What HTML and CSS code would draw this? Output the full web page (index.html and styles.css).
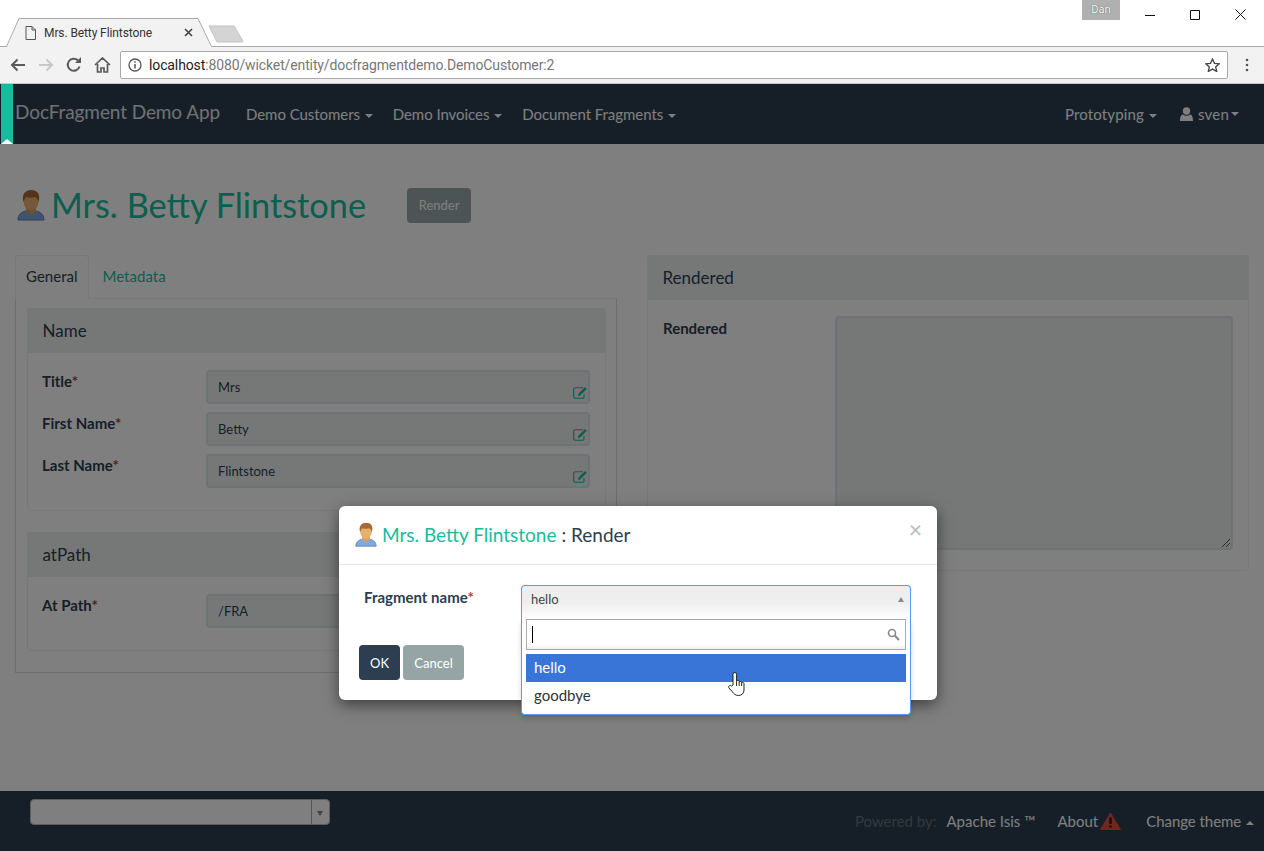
FILE: index.html
```html
<!DOCTYPE html>
<html>
<head>
    <title>Mrs. Betty Flintstone</title>
    <link rel="stylesheet" href="styles.css">
</head>
<body>
    <svg class="defs" width="0" height="0">
        <symbol id="person" viewBox="0 0 28 32">
            <path d="M1 31c0-6 4-8 8-9l5 2 5-2c4 1 8 3 8 9z" fill="#7fa9e0" stroke="#5a7fb5"/>
            <path d="M9 17h10v6l-5 3-5-3z" fill="#d9a066"/>
            <ellipse cx="14" cy="12" rx="7.5" ry="9.500" fill="#e8b06e"/>
            <path d="M6.500 13C4 5 9 1 14 1c6 0 10 4 7.500 12-1-3-2-4.500-3.500-5-3 1-6.500 1-8 0-1.500.5-2.500 2-3.500 5z" fill="#a5683a"/>
        </symbol>
        <symbol id="edit" viewBox="0 0 15 13">
            <path d="M11 8v2.500a1.800 1.800 0 0 1-1.800 1.800H2.300A1.800 1.800 0 0 1 .7 10.500V3.500A1.800 1.800 0 0 1 2.500 1.700H10" fill="none" stroke="#18bc9c" stroke-width="1.100"/>
            <path d="M5 10l.4-2.300L12 1l1.800 1.800-6.600 6.700z" fill="#18bc9c"/>
        </symbol>
    </svg>

    <div class="browser">
        <div class="tabstrip">
            <svg class="tab-shape" width="250" height="47" viewBox="0 0 250 47">
                <path d="M7 47L19 19h179l14 28z" fill="#f2f2f2"/>
                <path d="M0 46.500h6.500L19 18.500h179l13.500 28" fill="none" stroke="#a9a9a9"/>
                <path d="M209 26h25l9 15a1 1 0 0 1-1 1h-25z" fill="#d4d4d4" stroke="#c4c4c4"/>
            </svg>
            <div class="tab">
                <svg class="tab-page" width="11" height="14" viewBox="0 0 11 14"><path d="M1 .5h6l3.500 3.500v9.500H1zM7 .5V4h3.500" fill="none" stroke="#555"/></svg>
                <span class="tab-title">Mrs. Betty Flintstone</span>
                <svg class="tab-close" width="9" height="9" viewBox="0 0 9 9"><path d="M1 1l7 7M8 1L1 8" stroke="#444" stroke-width="1.600"/></svg>
            </div>
            <div class="win-user">Dan</div>
            <div class="win-buttons">
                <svg width="10" height="10" viewBox="0 0 10 10"><path d="M0 5.500h10" stroke="#111"/></svg>
                <svg width="10" height="10" viewBox="0 0 10 10"><path d="M.5.500h9v9h-9z" fill="none" stroke="#111"/></svg>
                <svg width="11" height="11" viewBox="0 0 11 11"><path d="M.5.500l10 10M10.500.500l-10 10" stroke="#111"/></svg>
            </div>
        </div>
        <div class="toolbar">
            <svg class="tool" width="16" height="14" viewBox="0 0 16 14"><path d="M15 7H2M7.500 1.500L2 7l5.500 5.500" fill="none" stroke="#5a5a5a" stroke-width="2"/></svg>
            <svg class="tool" width="16" height="14" viewBox="0 0 16 14"><path d="M1 7h13M8.500 1.500L14 7l-5.500 5.500" fill="none" stroke="#c8c8c8" stroke-width="2"/></svg>
            <svg class="tool" width="16" height="16" viewBox="0 0 16 16"><path d="M13.500 9.500A6 6 0 1 1 12 3.500" fill="none" stroke="#5a5a5a" stroke-width="2"/><path d="M9 6h6V0z" fill="#5a5a5a"/></svg>
            <svg class="tool" width="17" height="16" viewBox="0 0 17 16"><path d="M1 8l7.500-7L16 8M3.500 7v8h3.500v-4h3v4h3.500V7" fill="none" stroke="#5a5a5a" stroke-width="1.700"/></svg>
            <div class="omnibox">
                <svg width="14" height="14" viewBox="0 0 14 14"><circle cx="7" cy="7" r="6" fill="none" stroke="#555" stroke-width="1.300"/><path d="M7 6v4.500M7 3.200v1.600" stroke="#555" stroke-width="1.500"/></svg>
                <span class="url"><b>localhost</b>:8080/wicket/entity/docfragmentdemo.DemoCustomer:2</span>
                <svg class="star" width="15" height="14" viewBox="0 0 15 14"><path d="M7.500 1l2 4.300 4.700.5-3.500 3.100 1 4.600-4.200-2.400-4.200 2.400 1-4.600L.8 5.800l4.700-.5z" fill="none" stroke="#444" stroke-width="1.300"/></svg>
            </div>
            <svg class="kebab" width="4" height="14" viewBox="0 0 4 14"><circle cx="2" cy="2" r="1.300" fill="#555"/><circle cx="2" cy="7" r="1.300" fill="#555"/><circle cx="2" cy="12" r="1.300" fill="#555"/></svg>
        </div>
    </div>

    <div class="page">
        <nav class="navbar">
            <a class="brand">DocFragment Demo App</a>
            <a class="nav-link">Demo Customers <i class="caret"></i></a>
            <a class="nav-link">Demo Invoices <i class="caret"></i></a>
            <a class="nav-link">Document Fragments <i class="caret"></i></a>
            <div class="nav-right">
                <a class="nav-link nav-proto">Prototyping <i class="caret"></i></a>
                <a class="nav-link nav-user">
                    <svg width="13" height="14" viewBox="0 0 13 14"><circle cx="6.500" cy="4" r="3.700" fill="#fff"/><path d="M0 14c0-5 1.500-6.500 3-6.500 1 .8 2.200 1.200 3.500 1.200s2.500-.4 3.500-1.200c1.500 0 3 1.500 3 6.500z" fill="#fff"/></svg>
                    sven<i class="caret caret-tight"></i>
                </a>
            </div>
        </nav>

        <main class="content">
            <div class="title-row">
                <svg class="title-icon" width="28" height="32"><use href="#person"/></svg>
                <h1>Mrs. Betty Flintstone</h1>
                <button class="btn btn-render">Render</button>
            </div>

            <div class="columns">
                <div class="col-left">
                    <div class="tabs">
                        <a class="tab-item active">General</a>
                        <a class="tab-item">Metadata</a>
                    </div>
                    <div class="tab-pane">
                        <section class="panel panel-name">
                            <h3 class="panel-heading">Name</h3>
                            <div class="panel-body">
                                <div class="field">
                                    <label>Title<em>*</em></label>
                                    <div class="input">Mrs<svg class="edit" width="15" height="13"><use href="#edit"/></svg></div>
                                </div>
                                <div class="field">
                                    <label>First Name<em>*</em></label>
                                    <div class="input">Betty<svg class="edit" width="15" height="13"><use href="#edit"/></svg></div>
                                </div>
                                <div class="field">
                                    <label>Last Name<em>*</em></label>
                                    <div class="input">Flintstone<svg class="edit" width="15" height="13"><use href="#edit"/></svg></div>
                                </div>
                            </div>
                        </section>
                        <section class="panel panel-path">
                            <h3 class="panel-heading">atPath</h3>
                            <div class="panel-body">
                                <div class="field">
                                    <label>At Path<em>*</em></label>
                                    <div class="input">/FRA</div>
                                </div>
                            </div>
                        </section>
                    </div>
                </div>
                <div class="col-right">
                    <section class="panel panel-rendered">
                        <h3 class="panel-heading">Rendered</h3>
                        <div class="rendered-body">
                            <label>Rendered</label>
                            <div class="textarea">
                                <svg class="grip" width="8" height="8" viewBox="0 0 8 8"><path d="M8 0L0 8M8 4L4 8" stroke="#555"/></svg>
                            </div>
                        </div>
                    </section>
                </div>
            </div>
        </main>

        <footer class="footer">
            <div class="theme-select"><span class="theme-arrow"></span></div>
            <div class="footer-right">
                <span class="powered">Powered by:</span>
                <a class="foot-link foot-isis">Apache Isis &trade;</a>
                <a class="foot-link foot-about">About
                    <svg width="21" height="18" viewBox="0 0 21 18"><path d="M10.500 1L20.500 17.500H.5z" fill="#e74c3c" stroke="#e74c3c" stroke-linejoin="round"/><path d="M10.500 5.500v6.500M10.500 13.500v2" stroke="#161f28" stroke-width="2.400"/></svg>
                </a>
                <a class="foot-link foot-theme">Change theme <i class="caret caret-up"></i></a>
            </div>
        </footer>

        <div class="backdrop"></div>
        <div class="debug-bar"></div>

        <div class="modal">
            <div class="modal-header">
                <svg class="modal-icon" width="22" height="25"><use href="#person"/></svg>
                <h4><span class="modal-name">Mrs. Betty Flintstone</span> : Render</h4>
                <span class="modal-close">&times;</span>
            </div>
            <div class="modal-body">
                <label>Fragment name<em>*</em></label>
            </div>
            <div class="modal-footer">
                <button class="btn btn-ok">OK</button>
                <button class="btn btn-cancel">Cancel</button>
            </div>
            <div class="select-box">
                <div class="select-head">hello<span class="select-arrow"></span></div>
                <div class="select-drop">
                    <div class="select-search">
                        <span class="text-cursor"></span>
                        <svg width="13" height="13" viewBox="0 0 13 13"><circle cx="5" cy="5" r="3.500" fill="none" stroke="#888" stroke-width="1.600"/><path d="M7.800 7.800l4.200 4.200" stroke="#888" stroke-width="2.200"/></svg>
                    </div>
                    <div class="select-option selected">hello</div>
                    <div class="select-option">goodbye</div>
                </div>
            </div>
            <svg class="hand" width="19" height="24" viewBox="0 0 19 24"><path d="M5 13V2.300a1.800 1.800 0 0 1 3.600 0V9.500l.2-.5a1.300 1.300 0 0 1 2.400.3v1a1.300 1.300 0 0 1 2.400 0v1a1.300 1.300 0 0 1 2.400.2V18c0 3-2 5.500-5.500 5.500-3 0-4.500-1.500-6-3.500L1 16c-1.200-1.800 1-3.500 2.500-2z" fill="#fff" stroke="#222" stroke-linejoin="round"/><path d="M8.600 9.500v4.500M11.200 10.300v3.700M13.600 11.300v2.700" stroke="#222"/></svg>
        </div>
    </div>
</body>
</html>
```

FILE: styles.css
```css
* {
  box-sizing: border-box;
}

html, body {
  margin: 0;
  height: 851px;
  overflow: hidden;
}

body {
  font-family: "Lato", "Liberation Sans", sans-serif;
  font-size: 15px;
  color: #2c3e50;
  background: #fff;
}

.defs {
  display: block;
  height: 0;
}

/* browser window */
.browser {
  height: 84px;
}

.tabstrip {
  position: relative;
  height: 46px;
  display: flex;
  background: #fff;
}

.tab-shape {
  position: absolute;
  left: 0;
  top: 0;
}

.tab {
  position: relative;
  display: flex;
  align-items: center;
  width: 196px;
  height: 27px;
  margin-top: 19px;
  padding-left: 25px;
}

.tab-title {
  margin-left: 8px;
  font-family: "Roboto", sans-serif;
  font-size: 12px;
  letter-spacing: -.1px;
  color: #333;
}

.tab-close {
  margin-left: 32px;
}

.win-user {
  position: absolute;
  left: 1082px;
  top: 0;
  width: 38px;
  height: 20px;
  background: #b0b0b0;
  color: #fff;
  text-shadow: 0 0 1px #333;
  font-family: "Roboto", sans-serif;
  font-size: 11px;
  line-height: 20px;
  text-align: center;
}

.win-buttons {
  position: absolute;
  left: 1145px;
  top: 9px;
  display: flex;
  align-items: center;
  gap: 35px;
}

.toolbar {
  height: 38px;
  display: flex;
  align-items: center;
  padding-left: 10px;
  background: #f2f2f2;
  border-top: 1px solid #a9a9a9;
  border-bottom: 1px solid #c8c8c8;
}

.tool {
  margin-right: 12px;
}

.omnibox {
  display: flex;
  align-items: center;
  width: 1108px;
  height: 28px;
  margin-left: -3px;
  padding: 0 7px;
  background: #fff;
  border: 1px solid #a9a9a9;
  border-radius: 2px;
}

.url {
  margin-left: 7px;
  flex: 1;
  font-family: "Roboto", sans-serif;
  font-size: 14px;
  letter-spacing: -.12px;
  color: #777;
}

.url b {
  font-weight: 400;
  color: #222;
}

.kebab {
  margin-left: 17px;
}

/* page */
.page {
  position: relative;
  height: 767px;
  display: flex;
  flex-direction: column;
}

.navbar {
  height: 60px;
  flex: none;
  display: flex;
  align-items: center;
  padding-left: 15px;
  background: #2c3e50;
  color: #fff;
}

.brand {
  font-size: 19px;
  letter-spacing: -.1px;
  margin-right: 16px;
  margin-top: -6px;
  opacity: .85;
}

.nav-link {
  padding: 0 10px;
  letter-spacing: -.05px;
}

.nav-right {
  margin-left: auto;
  margin-right: 15px;
  display: flex;
}

.nav-proto {
  letter-spacing: .15px;
}

.nav-user {
  display: flex;
  align-items: center;
  gap: 5px;
  margin-left: 3px;
  letter-spacing: .2px;
}

.caret {
  display: inline-block;
  width: 0;
  height: 0;
  margin-left: 1px;
  vertical-align: middle;
  border-top: 4px solid currentColor;
  border-left: 4px solid transparent;
  border-right: 4px solid transparent;
}

.caret-tight {
  margin-left: -3px;
}

.caret-up {
  border-top: 0;
  border-bottom: 4px solid currentColor;
}

.content {
  flex: 1;
  padding: 0 15px;
}

.title-row {
  height: 111px;
  display: flex;
  align-items: center;
  padding-top: 11px;
}

.title-icon {
  margin-left: 2px;
  margin-right: 6px;
}

h1 {
  margin: -2px 0 0;
  font-size: 34.3px;
  font-weight: 400;
  color: #18bc9c;
}

.btn {
  border: 0;
  border-radius: 4px;
  color: #fff;
  font-family: inherit;
  font-size: 13px;
}

.btn-render {
  width: 64px;
  height: 35px;
  margin-left: 41px;
  background: #9aa8aa;
}

.columns {
  display: flex;
  gap: 30px;
}

.col-left {
  width: 602px;
}

.col-right {
  width: 602px;
}

.tabs {
  display: flex;
  height: 43px;
}

.tab-item {
  padding: 0 12.5px;
  line-height: 41px;
  letter-spacing: .02px;
  color: #18bc9c;
  border: 1px solid transparent;
}

.tab-item.active {
  width: 74px;
  padding: 0 10px;
  color: #2c3e50;
  background: #fff;
  border-color: #ecf0f1 #ecf0f1 transparent;
  border-radius: 4px 4px 0 0;
  margin-bottom: -1px;
  height: 44px;
}

.tab-pane {
  height: 375px;
  padding: 9px 10px 0 11px;
  border: 1px solid #ddd;
  border-top-color: #ecf0f1;
}

.panel {
  background: #fff;
  border: 1px solid #ecf0f1;
  border-radius: 4px;
}

.panel-heading {
  height: 45px;
  margin: -1px -1px 0;
  padding-left: 15.5px;
  background: #ecf0f1;
  border-radius: 4px 4px 0 0;
  font-size: 17px;
  font-weight: 400;
  line-height: 45px;
}

.panel-name {
  height: 203px;
}

.panel-path {
  height: 119px;
  margin-top: 21px;
}

.panel-body {
  padding: 17px 15px 0 14px;
}

.field {
  display: flex;
  height: 34px;
  margin-bottom: 8px;
}

.field label, .rendered-body label, .modal-body label {
  font-weight: 700;
}

.field label {
  width: 164px;
  padding-top: 2px;
}

em {
  font-style: normal;
  color: #a94442;
}

.input {
  position: relative;
  flex: 1;
  padding-left: 10px;
  background: #ecf0f1;
  border: 2px solid #dce4ec;
  border-radius: 4px;
  font-size: 13px;
  line-height: 30px;
}

.edit {
  position: absolute;
  right: 0;
  bottom: 3px;
}

.panel-rendered {
  height: 316px;
}

.rendered-body {
  display: flex;
  padding: 16px 15px 0;
}

.rendered-body label {
  width: 172px;
  padding-top: 3px;
}

.textarea {
  position: relative;
  width: 398px;
  height: 234px;
  background: #ecf0f1;
  border: 2px solid #dce4ec;
  border-radius: 4px;
}

.grip {
  position: absolute;
  right: 1px;
  bottom: 1px;
}

.footer {
  height: 60px;
  flex: none;
  display: flex;
  justify-content: space-between;
  padding: 8px 10px 0 30px;
  background: #2c3e50;
}

.theme-select {
  position: relative;
  width: 300px;
  height: 26px;
  background: #fff;
  border: 1px solid #bbb;
  border-radius: 4px;
}

.theme-arrow {
  position: absolute;
  right: 0;
  top: 0;
  bottom: 0;
  width: 18px;
  border-left: 1px solid #aaa;
}

.theme-arrow::after {
  content: "";
  position: absolute;
  left: 5px;
  top: 11px;
  border-top: 5px solid #888;
  border-left: 3px solid transparent;
  border-right: 3px solid transparent;
}

.footer-right {
  display: flex;
  align-items: center;
  height: 44px;
}

.powered {
  color: #7b8a8b;
  opacity: .7;
}

.foot-link {
  color: #fff;
  margin-left: 15px;
}

.foot-isis {
  margin-left: 10px;
}

.foot-about {
  display: flex;
  align-items: center;
  gap: 2px;
  margin-left: 22px;
  margin-right: 10px;
}

.foot-theme {
  letter-spacing: -.05px;
}

.backdrop {
  position: absolute;
  left: 0;
  top: 0;
  right: 0;
  bottom: 0;
  background: rgba(0,0,0,.5);
}

.debug-bar {
  position: absolute;
  left: 1px;
  top: 0;
  width: 12px;
  height: 60px;
  background: #18bc9c;
}

.debug-bar::after {
  content: "";
  position: absolute;
  left: 0;
  bottom: 0;
  border-bottom: 5px solid #fff;
  border-left: 6px solid transparent;
  border-right: 6px solid transparent;
}

/* dialog */
.modal {
  position: absolute;
  left: 339px;
  top: 422px;
  width: 598px;
  height: 194px;
  background: #fff;
  border-radius: 6px;
  box-shadow: 0 5px 15px rgba(0,0,0,.5);
}

.modal-header {
  position: relative;
  height: 59px;
  display: flex;
  align-items: center;
  padding: 0 0 2px 16px;
  border-bottom: 1px solid #e5e5e5;
}

.modal-icon {
  margin-right: 5px;
}

h4 {
  margin: 0;
  font-size: 19px;
  font-weight: 400;
}

.modal-name {
  color: #18bc9c;
}

.modal-close {
  position: absolute;
  right: 15px;
  top: 10px;
  font-size: 23px;
  line-height: 26px;
  color: #b4bcc0;
}

.modal-body {
  height: 80px;
  padding: 23px 0 0 25px;
}

.modal-footer {
  display: flex;
  gap: 3px;
  padding-left: 20px;
}

.btn-ok, .btn-cancel {
  height: 35px;
}

.btn-ok {
  width: 41px;
  background: #2c3e50;
}

.btn-cancel {
  width: 61px;
  background: #95a5a6;
}

.select-box {
  position: absolute;
  left: 182px;
  top: 79px;
  width: 390px;
}

.select-head {
  position: relative;
  height: 34px;
  padding-left: 9px;
  background: linear-gradient(#eee 50%, #fff);
  border: 1px solid #5897fb;
  border-bottom: 0;
  border-radius: 4px 4px 0 0;
  font-size: 13px;
  line-height: 27px;
  color: #444;
}

.select-arrow {
  position: absolute;
  right: 6px;
  top: 11px;
  border-bottom: 5px solid #888;
  border-left: 3px solid transparent;
  border-right: 3px solid transparent;
}

.select-drop {
  height: 96px;
  padding: 0 4px;
  background: #fff;
  border: 1px solid #5897fb;
  border-top: 0;
  border-radius: 0 0 4px 4px;
  box-shadow: 0 4px 5px rgba(0,0,0,.15);
}

.select-search {
  display: flex;
  align-items: center;
  justify-content: space-between;
  height: 31px;
  padding: 0 5px;
  border: 1px solid #aaa;
  background: linear-gradient(#fff 85%, #eee);
}

.text-cursor {
  width: 1px;
  height: 17px;
  background: #000;
}

.select-option {
  height: 28px;
  padding-left: 8px;
  font-size: 15px;
  line-height: 27px;
  color: #333;
}

.select-option.selected {
  margin-top: 4px;
  background: #3875d7;
  color: #fff;
}

.hand {
  position: absolute;
  left: 389px;
  top: 166px;
}
```
